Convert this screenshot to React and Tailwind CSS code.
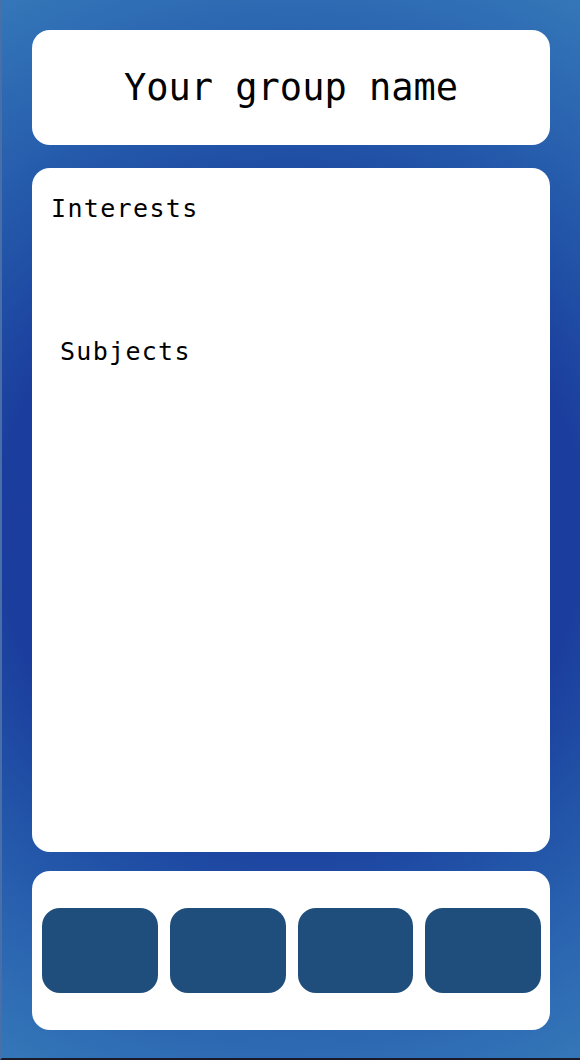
export default function App() {
  const mono = { fontFamily: '"DejaVu Sans Mono", "Liberation Mono", monospace' };
  return (
    <div className="w-[580px] h-[1060px] border-l-2 border-b-2 border-l-[#4a6fa8] border-b-[#1a1a2a] bg-[radial-gradient(circle_at_center,#1a3a9b_0%,#1b3d9d_48%,#2152a7_64%,#2a63b0_80%,#3477b8_100%)] pl-[30px] pr-[30px] pt-[30px] pb-[28px] flex flex-col" style={mono}>
      <div className="h-[115px] bg-white rounded-[18px] flex items-center justify-center">
        <span className="text-[37px] leading-none text-black">Your group name</span>
      </div>
      <div className="mt-[23px] h-[684px] bg-white rounded-[18px] pt-[28px] pl-[19px]">
        <div className="text-[25px] leading-none tracking-[1.35px] text-black">Interests</div>
        <div className="mt-[118px] ml-[9px] text-[25px] leading-none tracking-[1.3px] text-black">Subjects</div>
      </div>
      <div className="mt-[19px] h-[159px] bg-white rounded-[18px] pl-[10px] pr-[9px] flex items-center">
        <div className="grid grid-cols-4 gap-[12px] w-full">
          <div className="h-[85px] rounded-[18px] bg-[#1f4e7c]" />
          <div className="h-[85px] rounded-[18px] bg-[#1f4e7c]" />
          <div className="h-[85px] rounded-[18px] bg-[#1f4e7c]" />
          <div className="h-[85px] rounded-[18px] bg-[#1f4e7c]" />
        </div>
      </div>
    </div>
  );
}
